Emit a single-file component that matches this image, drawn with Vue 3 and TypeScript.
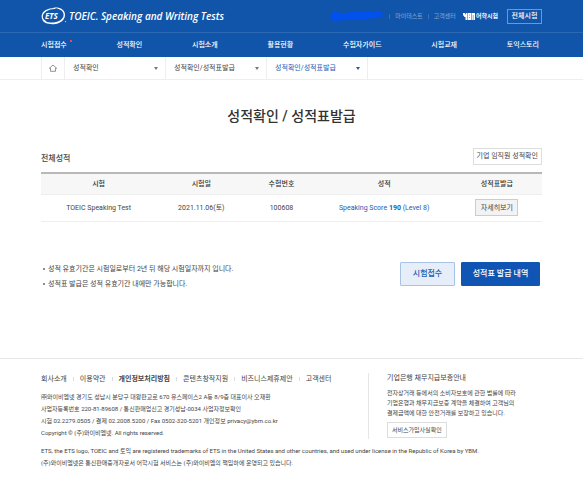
<script setup lang="ts">
import { ref } from 'vue'

interface Crumb {
  label: string
  value: string
  options: string[]
  active?: boolean
}

interface ScoreRow {
  test: string
  date: string
  number: string
  subject: string
  score: number
  level: string
}

const menu: string[] = ['시험접수', '성적확인', '시험소개', '활용현황', '수험자가이드', '시험교재', '토익스토리']

const crumbs = ref<Crumb[]>([
  { label: '대메뉴', value: '성적확인', options: ['성적확인'] },
  { label: '중메뉴', value: '성적확인/성적표발급', options: ['성적확인/성적표발급'] },
  { label: '소메뉴', value: '성적확인/성적표발급', options: ['성적확인/성적표발급'], active: true },
])

const columns: string[] = ['시험', '시험일', '수험번호', '성적', '성적표발급']

const rows: ScoreRow[] = [
  { test: 'TOEIC Speaking Test', date: '2021.11.06(토)', number: '100608', subject: 'Speaking Score', score: 190, level: '(Level 8)' },
]

const notes: string[] = [
  '성적 유효기간은 시험일로부터 2년 뒤 해당 시험일자까지 입니다.',
  '성적표 발급은 성적 유효기간 내에만 가능합니다.',
]

const policies: { text: string; strong?: boolean }[] = [
  { text: '회사소개' },
  { text: '이용약관' },
  { text: '개인정보처리방침', strong: true },
  { text: '콘텐츠창작지원' },
  { text: '비즈니스제휴제안' },
  { text: '고객센터' },
]

const company: string[] = [
  '㈜와이비엠넷 경기도 성남시 분당구 대왕판교로 670 유스페이스2 A동 8/9층 대표이사 오재환',
  '사업자등록번호 220-81-89608 / 통신판매업신고 경기성남-0034 사업자정보확인',
  '시험 02.2279.0505 / 결제 02.2008.5200 / Fax 0502-320-5201 개인정보 privacy@ybm.co.kr',
  'Copyright © (주)와이비엠넷. All rights reserved.',
]
</script>

<template>
  <div class="page">
    <header class="header">
      <div class="top wrap">
        <a class="logo" href="#">
          <svg class="mark" viewBox="0 0 26 18" aria-hidden="true">
            <path d="M12 .8C18.500-.2 24 2.400 24 8c0 5.200-5.200 9-11.600 9.200C6.600 17.400 2 15.600 1.300 12.600c2 2.400 6.200 3.300 10.700 2.900C18 15 22.500 12 22.600 7.900 22.700 3.600 18.400 1.500 12 .8Z" fill="#fff" />
            <path d="M14.500 1.500C7 1.200 1.300 4.800 1.200 9.400c0 2.300 1.500 4.200 4 5.300" fill="none" stroke="#fff" stroke-width="1.200" />
            <text x="4" y="12" class="mark-text">ETS</text>
            <circle cx="24.500" cy="14.500" r=".7" fill="#a9c2e6" />
          </svg>
          <span class="logo-text">TOEIC. Speaking and Writing Tests</span>
        </a>
        <div class="util">
          <svg class="scribble" viewBox="0 0 54 12" aria-hidden="true">
            <path d="M5 6.500C14 7.500 18 5.300 27 5.500S42 4.200 49 4.500" fill="none" stroke="#0250ee" stroke-width="7" stroke-linecap="round" />
            <circle cx="5.500" cy="6.500" r="5" fill="#0250ee" />
          </svg>
          <a class="util-link" href="#">마이테스트</a>
          <a class="util-link" href="#">고객센터</a>
          <a class="ybm" href="#">
            <svg class="ybm-mark" viewBox="0 0 12 7" aria-hidden="true">
              <path d="M0 0h2l.5 2L3 0h1.500v7H2.500V4H1.500L0 2ZM5 0h3v7H5ZM8.500 0H12v7H8.500Z" fill="#fff" />
              <path d="M6 2h1M6 4.500h1M10.200 2v5" stroke="#1055aa" stroke-width=".5" />
            </svg>
            <span>어학시험</span>
          </a>
          <button class="all-tests" type="button">전체시험</button>
        </div>
      </div>
      <nav class="nav">
        <ul class="wrap menu">
          <li v-for="(item, i) in menu" :key="item">
            <a :class="{ fresh: i === 0 }" href="#">{{ item }}</a>
          </li>
        </ul>
      </nav>
    </header>

    <div class="crumb-bar">
      <div class="wrap crumbs">
        <a class="home" href="#" aria-label="홈">
          <svg viewBox="0 0 8 8" aria-hidden="true">
            <path d="M.3 4.300 4 1 7.700 4.300H6.500v3h-5v-3Z" fill="none" stroke="#777" stroke-width=".8" />
          </svg>
        </a>
        <div v-for="c in crumbs" :key="c.label" class="crumb" :class="{ active: c.active }">
          <select v-model="c.value" :aria-label="c.label">
            <option v-for="o in c.options" :key="o" :value="o">{{ o }}</option>
          </select>
          <svg class="caret" viewBox="0 0 4 3" aria-hidden="true"><path d="M0 0h4L2 3Z" fill="currentColor" /></svg>
        </div>
      </div>
    </div>

    <main class="wrap main">
      <h1>성적확인 / 성적표발급</h1>
      <div class="section-head">
        <h2>전체성적</h2>
        <button class="corp" type="button">기업 임직원 성적확인</button>
      </div>
      <table>
        <colgroup>
          <col class="c-test" /><col class="c-date" /><col class="c-num" /><col class="c-score" /><col class="c-issue" />
        </colgroup>
        <thead>
          <tr><th v-for="c in columns" :key="c" scope="col">{{ c }}</th></tr>
        </thead>
        <tbody>
          <tr v-for="r in rows" :key="r.number">
            <td>{{ r.test }}</td>
            <td>{{ r.date }}</td>
            <td>{{ r.number }}</td>
            <td class="score">{{ r.subject }} <strong>{{ r.score }}</strong> {{ r.level }}</td>
            <td><button class="detail" type="button">자세히보기</button></td>
          </tr>
        </tbody>
      </table>
      <div class="below">
        <ul class="notes">
          <li v-for="n in notes" :key="n">{{ n }}</li>
        </ul>
        <div class="actions">
          <button class="btn light" type="button">시험접수</button>
          <button class="btn solid" type="button">성적표 발급 내역</button>
        </div>
      </div>
    </main>

    <footer class="footer">
      <div class="wrap">
        <div class="foot-cols">
          <div class="foot-main">
            <ul class="policies">
              <li v-for="p in policies" :key="p.text"><a href="#" :class="{ strong: p.strong }">{{ p.text }}</a></li>
            </ul>
            <p v-for="line in company" :key="line">{{ line }}</p>
          </div>
          <div class="foot-side">
            <h3>기업은행 채무지급보증안내</h3>
            <p>전자상거래 등에서의 소비자보호에 관한 법률에 따라<br />기업은행과 채무지급보증 계약을 체결하여 고객님의<br />결제금액에 대한 안전거래를 보장하고 있습니다.</p>
            <button class="verify" type="button">서비스가입사실확인</button>
          </div>
        </div>
        <div class="legal">
          <p>ETS, the ETS logo, TOEIC and 토익 are registered trademarks of ETS in the United States and other countries, and used under license in the Republic of Korea by YBM.</p>
          <p>(주)와이비엠넷은 통신판매중개자로서 어학시험 서비스는 (주)와이비엠의 책임하에 운영되고 있습니다.</p>
        </div>
      </div>
    </footer>
  </div>
</template>

<style>
body {
  margin: 0;
  background: #fff;
}
</style>

<style scoped>
.page {
  font-family: Roboto, "Noto Sans CJK KR", sans-serif;
  font-size: 7px;
  line-height: 12px;
  color: #444;
}
.page * {
  box-sizing: border-box;
}
.wrap {
  padding: 0 41px;
}
a {
  color: inherit;
  text-decoration: none;
}
ul,
h1,
h2,
h3,
p {
  margin: 0;
  padding: 0;
  list-style: none;
}
button,
select {
  font: inherit;
  color: inherit;
  margin: 0;
  padding: 0;
  white-space: nowrap;
}
.header {
  background: #1055aa;
  color: #fff;
}
.top {
  display: flex;
  align-items: center;
  justify-content: space-between;
  height: 32px;
}
.logo,
.util,
.ybm {
  display: flex;
  align-items: center;
}
.logo {
  gap: 2px;
}
.mark {
  width: 26px;
  height: 18px;
}
.mark-text {
  font: italic 700 8px "Open Sans", sans-serif;
  fill: #fff;
}
.logo-text {
  font: italic 600 10px/16px "Open Sans", sans-serif;
  white-space: nowrap;
}
.util {
  gap: 5px;
}
.scribble {
  width: 54px;
  height: 12px;
}
.util-link {
  display: flex;
  align-items: center;
  gap: 5px;
  font-size: 6px;
  color: #86a8d8;
}
.util-link::before {
  content: "";
  width: 1px;
  height: 5px;
  background: #3a70bb;
}
.ybm {
  gap: 1px;
  margin: 0 4px 0 2px;
  font-size: 6px;
  font-weight: 700;
}
.ybm-mark {
  width: 12px;
  height: 7px;
}
.all-tests {
  width: 35px;
  height: 15px;
  background: none;
  border: 1px solid #7096cc;
  font-weight: 500;
}
.nav {
  border-top: 1px solid #2b69b5;
}
.menu {
  display: flex;
  justify-content: space-between;
  padding-right: 44px;
  line-height: 24px;
  font-weight: 500;
}
.fresh {
  position: relative;
}
.fresh::after {
  content: "";
  position: absolute;
  top: -1px;
  right: -5px;
  width: 2px;
  height: 2px;
  background: #f04848;
}
.crumb-bar {
  border-bottom: 1px solid #eee;
}
.crumbs {
  display: flex;
  height: 22px;
}
.home {
  display: flex;
  align-items: center;
  justify-content: center;
  width: 24px;
  border: solid #eee;
  border-width: 0 1px;
}
.home svg {
  width: 8px;
  height: 8px;
}
.crumb {
  display: grid;
  grid-template-columns: 1fr;
  align-items: center;
  width: 101px;
  border-right: 1px solid #eee;
}
.crumb select,
.caret {
  grid-area: 1 / 1;
}
.crumb select {
  appearance: none;
  width: 100%;
  height: 22px;
  padding-left: 8px;
  border: 0;
  background: none;
}
.caret {
  width: 4px;
  height: 3px;
  justify-self: end;
  margin-right: 7px;
  color: #777;
  pointer-events: none;
}
.crumb.active,
.crumb.active .caret {
  color: #1a5cb5;
}
h1 {
  padding-top: 26px;
  font-size: 14px;
  line-height: 20px;
  font-weight: 500;
  text-align: center;
  color: #333;
}
.section-head {
  display: flex;
  align-items: center;
  justify-content: space-between;
  margin: 21px 0 7px;
}
h2 {
  padding-top: 6px;
  font-size: 8px;
  font-weight: 500;
  color: #444;
}
.corp {
  height: 17px;
  padding: 0 3px;
  background: #fff;
  border: 1px solid #ddd;
}
table {
  width: 100%;
  border-collapse: collapse;
  table-layout: fixed;
  text-align: center;
  border-top: 2px solid #b8b8b8;
}
.c-test {
  width: 23%;
}
.c-date {
  width: 18%;
}
.c-num {
  width: 14%;
}
.c-score {
  width: 27%;
}
.c-issue {
  width: 18%;
}
th {
  height: 21px;
  padding: 0;
  font-weight: 500;
  background: #f7f7f7;
  color: #333;
}
td {
  height: 27px;
  padding: 0;
  border: solid #eee;
  border-width: 1px 0;
}
.score {
  color: #1a5cb5;
}
.detail {
  width: 43px;
  height: 17px;
  background: #f3f3f3;
  border: 1px solid #ccc;
}
.below {
  display: flex;
  justify-content: space-between;
  margin-top: 40px;
  padding-right: 2px;
}
.notes li {
  display: flex;
  align-items: center;
  gap: 3px;
  padding-left: 2px;
  line-height: 15px;
}
.notes li::before {
  content: "";
  width: 2px;
  height: 2px;
  border-radius: 50%;
  background: #666;
}
.actions {
  display: flex;
  gap: 6px;
}
.btn {
  height: 24px;
  border: 1px solid #1055b4;
  border-radius: 1px;
  font-size: 8px;
  font-weight: 500;
}
.light {
  width: 55px;
  background: #e6eef9;
  border-color: #a9c3e6;
  color: #1a5cb5;
}
.solid {
  width: 79px;
  background: #1055b4;
  color: #fff;
}
.footer {
  margin-top: 66px;
  padding: 14px 0 12px;
  border-top: 1px solid #e6e6e6;
  font-size: 6px;
}
.foot-cols {
  display: flex;
}
.foot-main {
  flex: 0 0 328px;
  border-right: 1px solid #e6e6e6;
}
.policies {
  display: flex;
  margin-bottom: 6px;
  font-size: 7px;
}
.policies li {
  display: flex;
  align-items: center;
}
.policies li + li::before {
  content: "";
  width: 1px;
  height: 4px;
  margin: 0 6px;
  background: #ddd;
}
.strong {
  font-weight: 700;
}
.foot-side {
  padding-left: 18px;
  line-height: 10px;
}
h3 {
  margin-bottom: 5px;
  font-size: 7px;
  line-height: 10px;
  font-weight: 400;
}
.verify {
  height: 16px;
  margin-top: 4px;
  padding: 0 4px;
  background: #fff;
  border: 1px solid #ddd;
}
.legal {
  margin-top: 6px;
}
</style>
